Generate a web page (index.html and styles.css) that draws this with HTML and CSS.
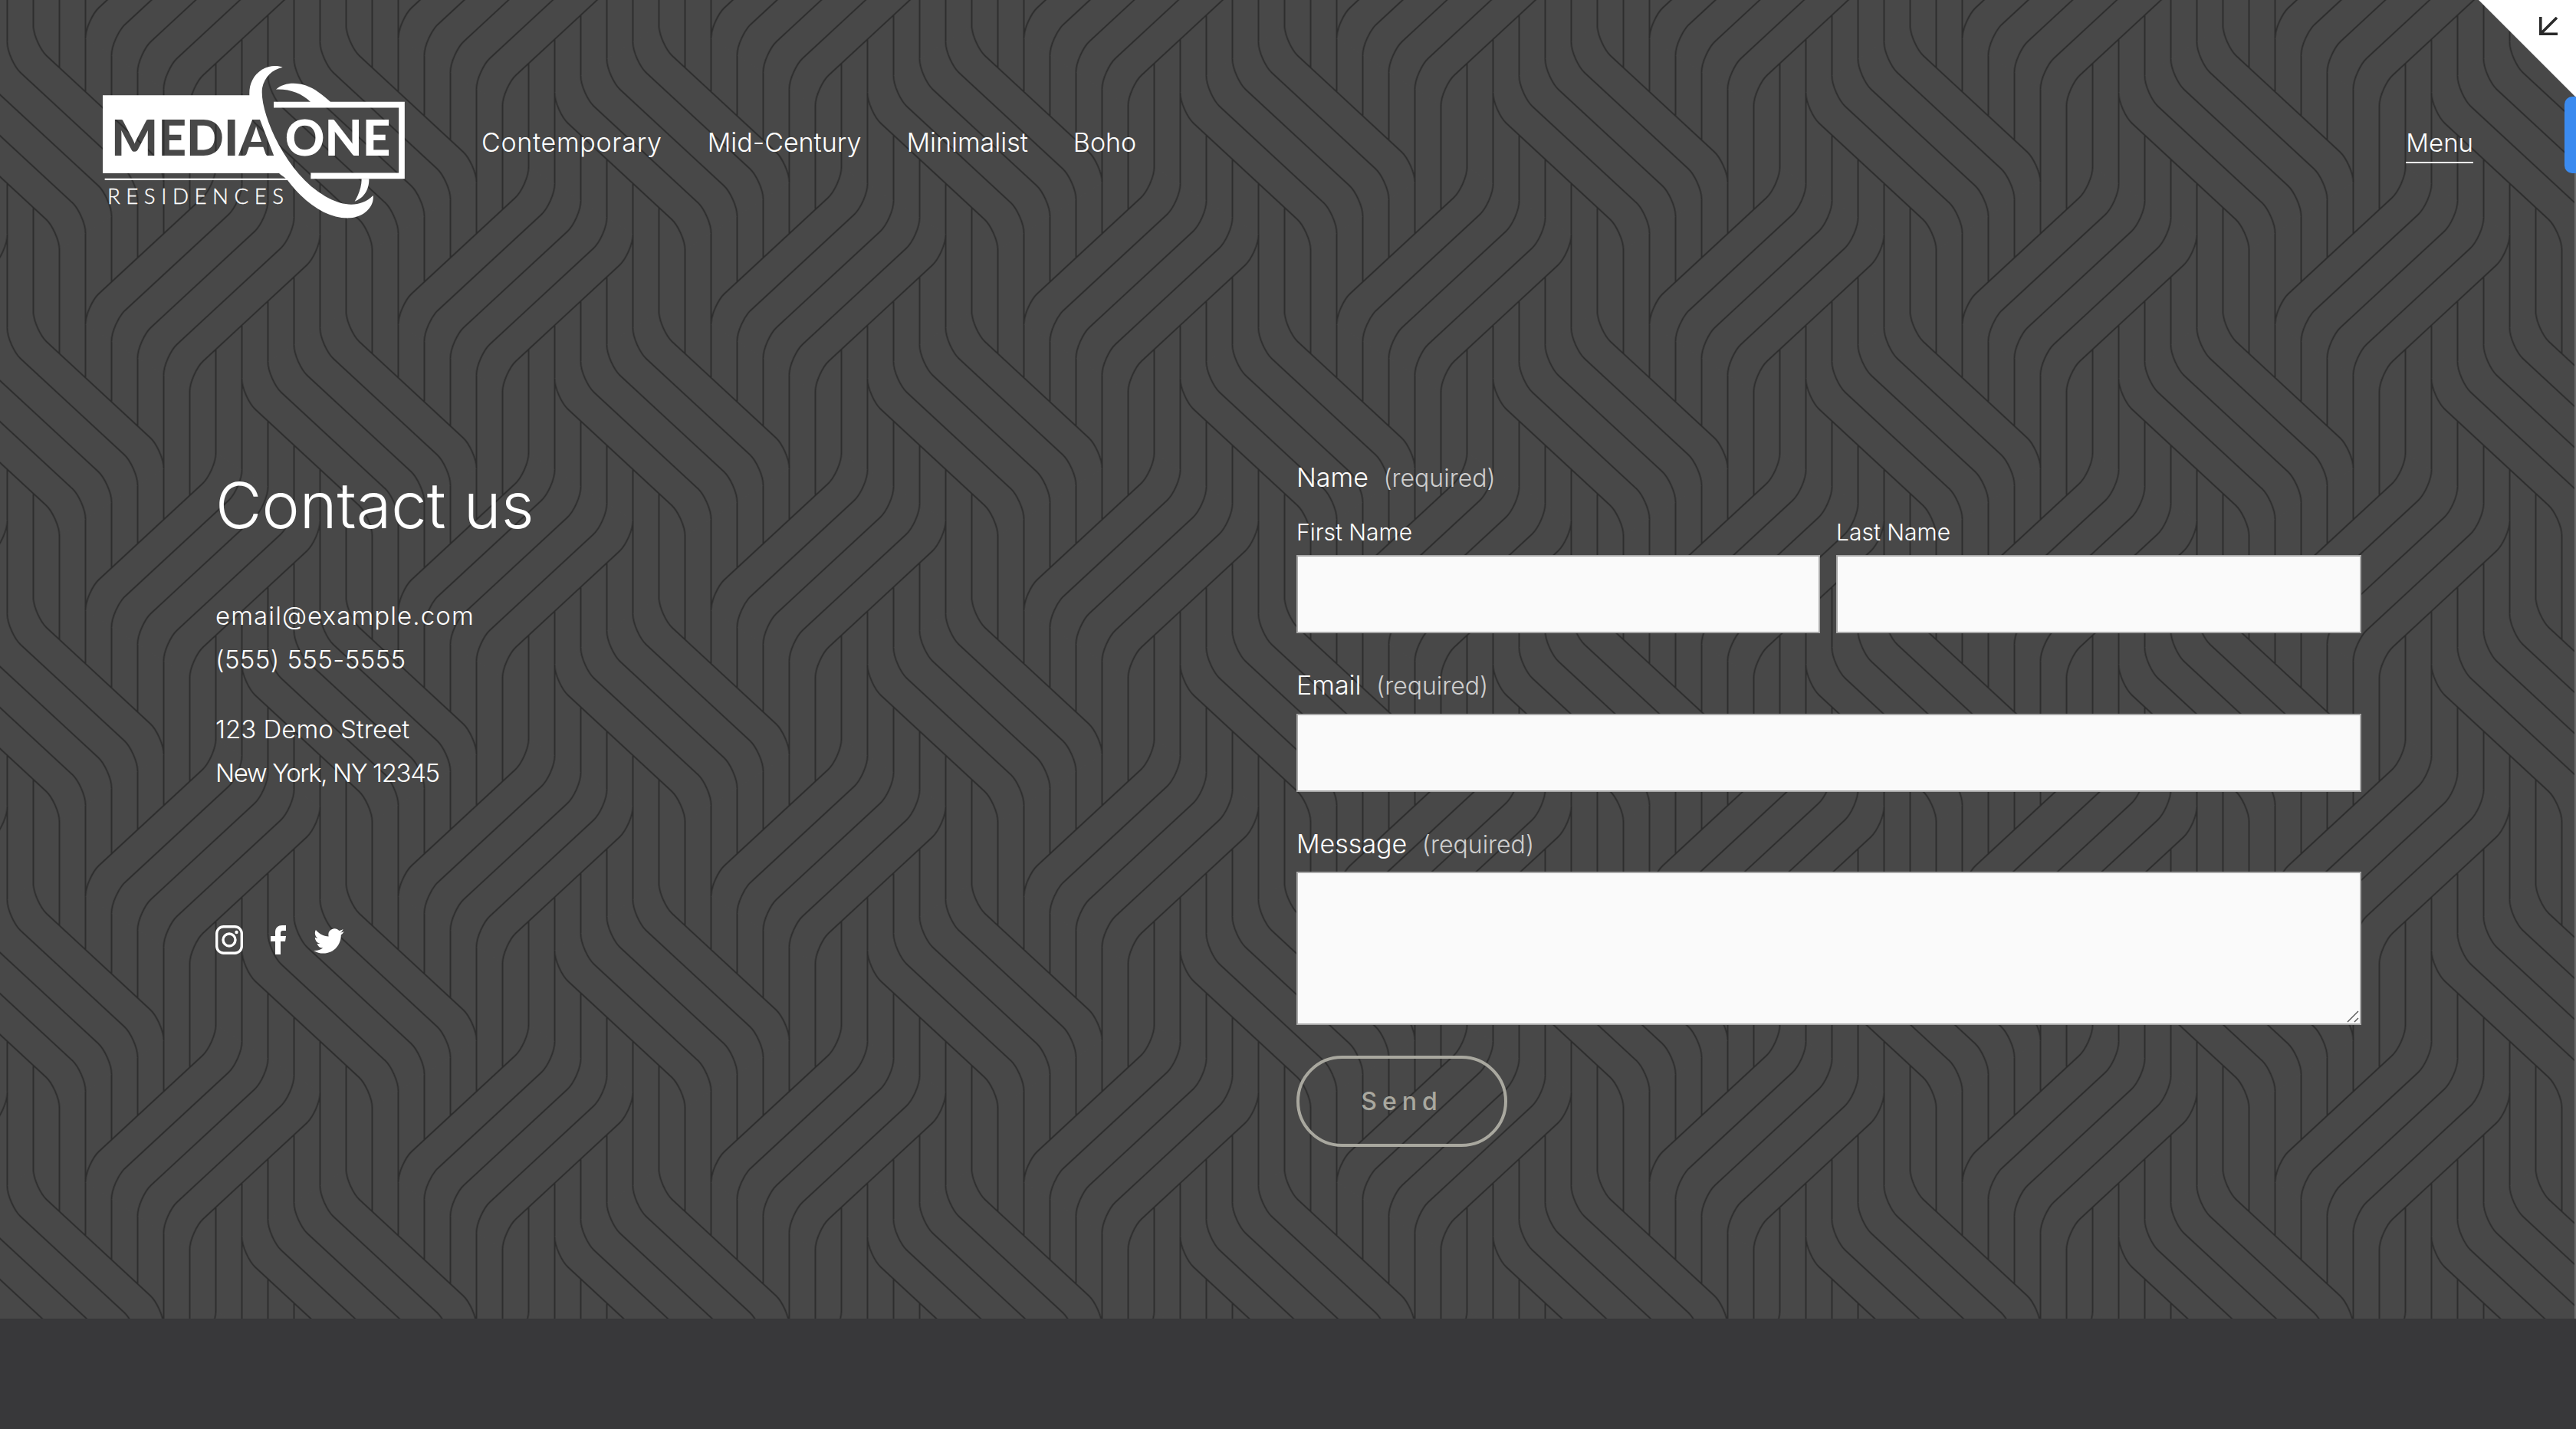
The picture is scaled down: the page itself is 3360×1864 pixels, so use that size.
FILE: index.html
```html
<!DOCTYPE html>
<html lang="en">
<head>
    <meta charset="UTF-8">
    <title>Contact us - Media One Residences</title>
    <link rel="stylesheet" href="styles.css">
</head>
<body>
    <section class="hero">
        <svg class="weave" width="100%" height="100%" aria-hidden="true">
            <defs>
                <path id="up-line" d="M0 14C0 1 9.600-18.600 17.500-26L152.500-151C160.400-158.400 170-178 170-191"/>
                <path id="down-line" d="M0-14C0-1 9.600 18.600 17.500 26L152.500 151C160.400 158.400 170 178 170 191"/>
                <g id="up-band">
                    <path class="weave-fill" d="M0 14C0 1 9.600-18.600 17.500-26L152.500-151C160.400-158.400 170-178 170-191L306-103C306-90 296.400-70.400 288.500-63L153.500 62C145.600 69.400 136 89 136 102Z"/>
                    <use href="#up-line"/>
                    <use href="#up-line" x="34" y="22"/>
                    <use href="#up-line" x="68" y="44"/>
                    <use href="#up-line" x="102" y="66"/>
                    <use href="#up-line" x="136" y="88"/>
                </g>
                <g id="down-band">
                    <path class="weave-fill" d="M0-14C0-1 9.600 18.600 17.500 26L152.500 151C160.400 158.400 170 178 170 191L306 103C306 90 296.400 70.400 288.500 63L153.500-62C145.600-69.400 136-89 136-102Z"/>
                    <use href="#down-line"/>
                    <use href="#down-line" x="34" y="-22"/>
                    <use href="#down-line" x="68" y="-44"/>
                    <use href="#down-line" x="102" y="-66"/>
                    <use href="#down-line" x="136" y="-88"/>
                </g>
                <pattern id="weave" x="94.500" y="36" width="408" height="373" patternUnits="userSpaceOnUse">
                    <g class="weave-lines">
                        <path d="M17 0V373M51 0V373M85 0V373M119 0V373M153 0V373M187 0V373M221 0V373M255 0V373M289 0V373M323 0V373M357 0V373M391 0V373"/>
                        <use href="#up-band" x="17" y="0"/>
                        <use href="#up-band" x="17" y="373"/>
                        <use href="#down-band" x="221" y="99"/>
                        <use href="#down-band" x="-187" y="99"/>
                    </g>
                </pattern>
            </defs>
            <rect width="100%" height="100%" fill="url(#weave)"/>
        </svg>

        <header class="site-header">
            <a class="logo" href="#">
                <svg viewBox="0 0 1440 780" width="480" height="260" role="img" aria-label="Media One Residences">
                    <defs>
                        <mask id="media-cut" maskUnits="userSpaceOnUse" x="0" y="0" width="1440" height="780">
                            <rect width="1440" height="780" fill="#fff"/>
                            <text class="logo-big" x="135" y="428" textLength="635" lengthAdjust="spacingAndGlyphs" fill="#000">MEDIA</text>
                        </mask>
                    </defs>
                    <path mask="url(#media-cut)" fill="#fff" d="M102 193H676C674 150 690 115 725 92C750 76 785 74 806 83C765 92 735 120 726 165C720 215 745 300 790 385C840 475 900 550 985 595C1050 630 1115 630 1160 585C1165 625 1130 668 1070 673C990 678 900 625 825 525H110V518H818C808 510 800 505 792 498H102Z"/>
                    <path fill="#fff" d="M780 170C820 135 890 140 945 180C965 194 982 208 994 220H916C880 185 835 168 780 170Z"/>
                    <path fill="#fff" d="M1115 520H1144C1145 560 1125 595 1088 608C1105 580 1115 550 1115 520Z"/>
                    <path fill="none" stroke="#fff" stroke-width="23" d="M771 230H1272V508H916"/>
                    <text class="logo-big" x="815" y="428" textLength="413" lengthAdjust="spacingAndGlyphs" fill="#fff">ONE</text>
                    <text class="logo-small" x="120" y="618" textLength="690" fill="#fff">RESIDENCES</text>
                </svg>
            </a>
            <nav class="main-nav">
                <a class="nav-wide" href="#">Contemporary</a>
                <a href="#">Mid-Century</a>
                <a href="#">Minimalist</a>
                <a href="#">Boho</a>
            </nav>
            <a class="menu-link" href="#">Menu</a>
        </header>

        <main class="contact">
            <div class="contact-info">
                <h1>Contact us</h1>
                <p class="info-block"><span class="line-wide">email@example.com</span><br><span class="line-phone">(555) 555-5555</span></p>
                <p class="info-block">123 Demo Street<br><span class="line-tight">New York, NY 12345</span></p>
                <div class="social">
                    <a href="#" aria-label="Instagram">
                        <svg viewBox="0 0 36 38" width="36" height="38" fill="none" stroke="#fff" stroke-width="3.4">
                            <rect x="1.7" y="1.7" width="32.6" height="34.6" rx="9"/>
                            <circle cx="18" cy="19" r="8"/>
                            <circle cx="27.5" cy="9" r="2.2" fill="#fff" stroke="none"/>
                        </svg>
                    </a>
                    <a href="#" aria-label="Facebook">
                        <svg viewBox="0 0 20 38" width="20" height="38" fill="#fff">
                            <path d="M6 38V21H0V14H6V9C6 3 10 0 15 0H20V7H16C13.500 7 13 8.500 13 10V14H20L19 21H13V38Z"/>
                        </svg>
                    </a>
                    <a class="twitter" href="#" aria-label="Twitter">
                        <svg viewBox="0 0 24 20" width="40" height="33" fill="#fff">
                            <path d="M23.953 2.570a10 10 0 01-2.825.775 4.958 4.958 0 002.163-2.723c-.951.555-2.005.959-3.127 1.184a4.920 4.920 0 00-8.384 4.482C7.690 6.095 4.067 4.130 1.640 1.162a4.822 4.822 0 00-.666 2.475c0 1.710.870 3.213 2.188 4.096a4.904 4.904 0 01-2.228-.616v.060a4.923 4.923 0 003.946 4.827 4.996 4.996 0 01-2.212.085 4.936 4.936 0 004.604 3.417 9.867 9.867 0 01-6.102 2.105c-.390 0-.779-.023-1.170-.067a13.995 13.995 0 007.557 2.209c9.053 0 13.998-7.496 13.998-13.985 0-.210 0-.420-.015-.630A9.935 9.935 0 0024 2.590z"/>
                        </svg>
                    </a>
                </div>
            </div>

            <form class="contact-form">
                <fieldset class="field">
                    <legend class="field-label">Name <span>(required)</span></legend>
                    <div class="name-row">
                        <label>First Name<input type="text"></label>
                        <label>Last Name<input type="text"></label>
                    </div>
                </fieldset>
                <label class="field">
                    <span class="field-label">Email <span>(required)</span></span>
                    <input type="email">
                </label>
                <label class="field field-last">
                    <span class="field-label">Message <span>(required)</span></span>
                    <span class="textarea-wrap">
                        <textarea></textarea>
                        <svg class="grip" viewBox="0 0 16 16" width="16" height="16" fill="none" stroke="#555" stroke-width="1.400">
                            <path d="M1 15L15 1M10 15L15 10"/>
                        </svg>
                    </span>
                </label>
                <button type="button" class="send">Send</button>
            </form>
        </main>

        <a class="corner" href="#" aria-label="Collapse">
            <svg viewBox="0 0 24 24" width="24" height="24" fill="none" stroke="#2a2a2a" stroke-width="3.6">
                <path d="M23 1L2 22M1.800 0V22.200H24"/>
            </svg>
        </a>
        <div class="blue-tab"></div>
        <div class="edge-strip"></div>
    </section>
    <footer class="site-footer"></footer>
</body>
</html>
```

FILE: styles.css
```css
* {
    box-sizing: border-box;
}
body {
    margin: 0;
    font-family: 'Inter', 'Lato', sans-serif;
    font-weight: 300;
    color: #fff;
    background: #38383a;
}
a {
    color: inherit;
    text-decoration: none;
}
.hero {
    position: relative;
    height: 1720px;
    background: #484848;
    overflow: hidden;
}
.weave {
    position: absolute;
    inset: 0;
}
.weave-lines {
    fill: none;
    stroke: #2b2b2b;
    stroke-width: 1.8;
}
.weave-fill {
    fill: #484848;
    stroke: none;
}
.site-header {
    position: relative;
    display: flex;
    align-items: flex-start;
    padding: 60px 134px 0 100px;
    height: 500px;
}
.logo {
    display: block;
    width: 480px;
    height: 260px;
    margin-right: 48px;
}
.logo svg {
    display: block;
}
.logo-big {
    font-family: 'Lato', sans-serif;
    font-weight: 900;
    font-size: 194px;
}
.logo-small {
    font-family: 'Lato', sans-serif;
    font-weight: 300;
    font-size: 83px;
    stroke: #fff;
    stroke-width: 1.2;
}
.main-nav {
    display: flex;
    gap: 59px;
    padding-top: 105px;
    font-size: 34px;
    line-height: 42px;
}
.nav-wide {
    letter-spacing: .7px;
}
.menu-link {
    margin-left: auto;
    margin-top: 105px;
    height: 48px;
    font-size: 33px;
    line-height: 42px;
    border-bottom: 2px solid #fff;
}
.contact {
    position: relative;
    display: grid;
    grid-template-columns: 1410px 1389px;
    padding-left: 281px;
}
.contact-info h1 {
    margin: 109px 0 66px;
    font-size: 83px;
    line-height: 100px;
    font-weight: 300;
}
.info-block {
    margin: 0 0 34px;
    font-size: 33px;
    line-height: 57px;
}
.line-wide {
    letter-spacing: 1.100px;
}
.line-phone {
    letter-spacing: .4px;
}
.line-tight {
    letter-spacing: -1.400px;
}
.social {
    display: flex;
    align-items: center;
    gap: 36px;
    margin-top: 170px;
}
.social a {
    display: block;
    height: 38px;
}
.social .twitter {
    height: 33px;
    margin-top: 3px;
}
.social svg {
    display: block;
}
.contact-form {
    padding-top: 100px;
}
.field {
    display: block;
    border: 0;
    margin: 0 0 45px;
    padding: 0;
}
.field-last {
    margin-bottom: 40px;
}
.field-label {
    display: block;
    padding: 0;
    font-size: 34px;
    line-height: 46px;
    margin-bottom: 13px;
}
.field-last .field-label {
    margin-bottom: 12px;
}
.field-label span {
    margin-left: 10px;
    font-size: 32px;
    color: #cfcfcf;
}
.name-row {
    display: grid;
    grid-template-columns: 683px 685px;
    gap: 21px;
    margin-top: 14px;
}
.name-row label {
    display: block;
    font-size: 30px;
    line-height: 40px;
}
input,
textarea {
    display: block;
    width: 100%;
    height: 102px;
    margin-top: 10px;
    border: 2px solid #a9a9a9;
    border-radius: 0;
    background: #fafafa;
}
.field-label + input {
    margin-top: 0;
}
textarea {
    height: 200px;
    margin-top: 0;
    resize: none;
}
.textarea-wrap {
    position: relative;
    display: block;
}
.grip {
    position: absolute;
    right: 3px;
    bottom: 3px;
}
.send {
    display: block;
    width: 275px;
    height: 119px;
    border: 4px solid #a9a89f;
    border-radius: 60px;
    background: transparent;
    color: #a9a89f;
    font-family: inherit;
    font-size: 32px;
    font-weight: 500;
    letter-spacing: 7px;
}
.corner {
    position: absolute;
    top: 0;
    right: 0;
    width: 127px;
    height: 127px;
    background: #fff;
    clip-path: polygon(0 0, 100% 0, 100% 100%);
}
.corner svg {
    position: absolute;
    top: 22px;
    left: 79px;
}
.blue-tab {
    position: absolute;
    top: 126px;
    right: 0;
    width: 15px;
    height: 100px;
    background: #3b8bf0;
    border-radius: 10px 0 0 10px;
}
.edge-strip {
    position: absolute;
    top: 226px;
    right: 0;
    bottom: 0;
    width: 2px;
    background: #6b6b6b;
}
.site-footer {
    height: 144px;
    background: #38383a;
}
```
